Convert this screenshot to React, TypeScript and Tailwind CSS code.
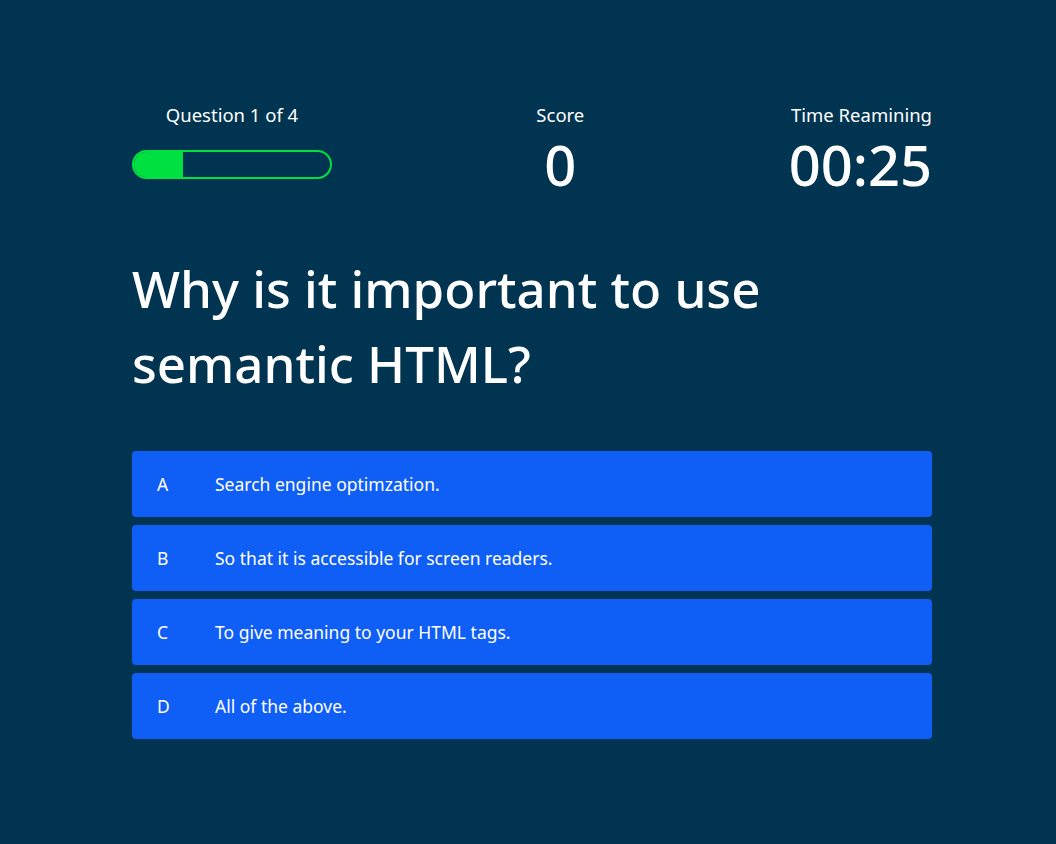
import React from 'react';

const options = [
  { key: 'A', text: 'Search engine optimzation.' },
  { key: 'B', text: 'So that it is accessible for screen readers.' },
  { key: 'C', text: 'To give meaning to your HTML tags.' },
  { key: 'D', text: 'All of the above.' },
];

export default function App() {
  return (
    <div
      className="min-h-screen bg-[#003450] text-white"
      style={{ fontFamily: '"Noto Sans", Lato, sans-serif' }}
    >
      <div className="w-[800px] ml-[132px] pt-[103px]">
        {/* Header stats */}
        <div className="flex justify-between items-start">
          <div className="flex flex-col items-center w-[200px]">
            <span className="text-[18.5px] leading-6">Question 1 of 4</span>
            <div className="mt-[23px] w-[200px] h-[29px] rounded-full border-2 border-[#00e040] overflow-hidden">
              <div className="h-full w-[49px] bg-[#00e040]" />
            </div>
          </div>
          <div className="flex flex-col items-center">
            <span className="text-[18.5px] leading-6">Score</span>
            <span className="text-[56px] leading-none font-medium mt-[9px]">0</span>
          </div>
          <div className="flex flex-col items-end">
            <span className="text-[18.5px] leading-6">Time Reamining</span>
            <span className="text-[56px] leading-none font-medium mt-[9px]">00:25</span>
          </div>
        </div>

        {/* Question */}
        <h1 className="mt-[59px] text-[51px] leading-[75px] font-medium">
          Why is it important to use semantic HTML?
        </h1>

        {/* Options */}
        <div className="mt-[50px] flex flex-col gap-2">
          {options.map((o) => (
            <button
              key={o.key}
              className="flex items-center h-[66px] w-full rounded bg-[#0f5ef6] text-left text-[17.5px]"
            >
              <span className="w-[83px] pl-[25px]">{o.key}</span>
              <span>{o.text}</span>
            </button>
          ))}
        </div>
      </div>
    </div>
  );
}
